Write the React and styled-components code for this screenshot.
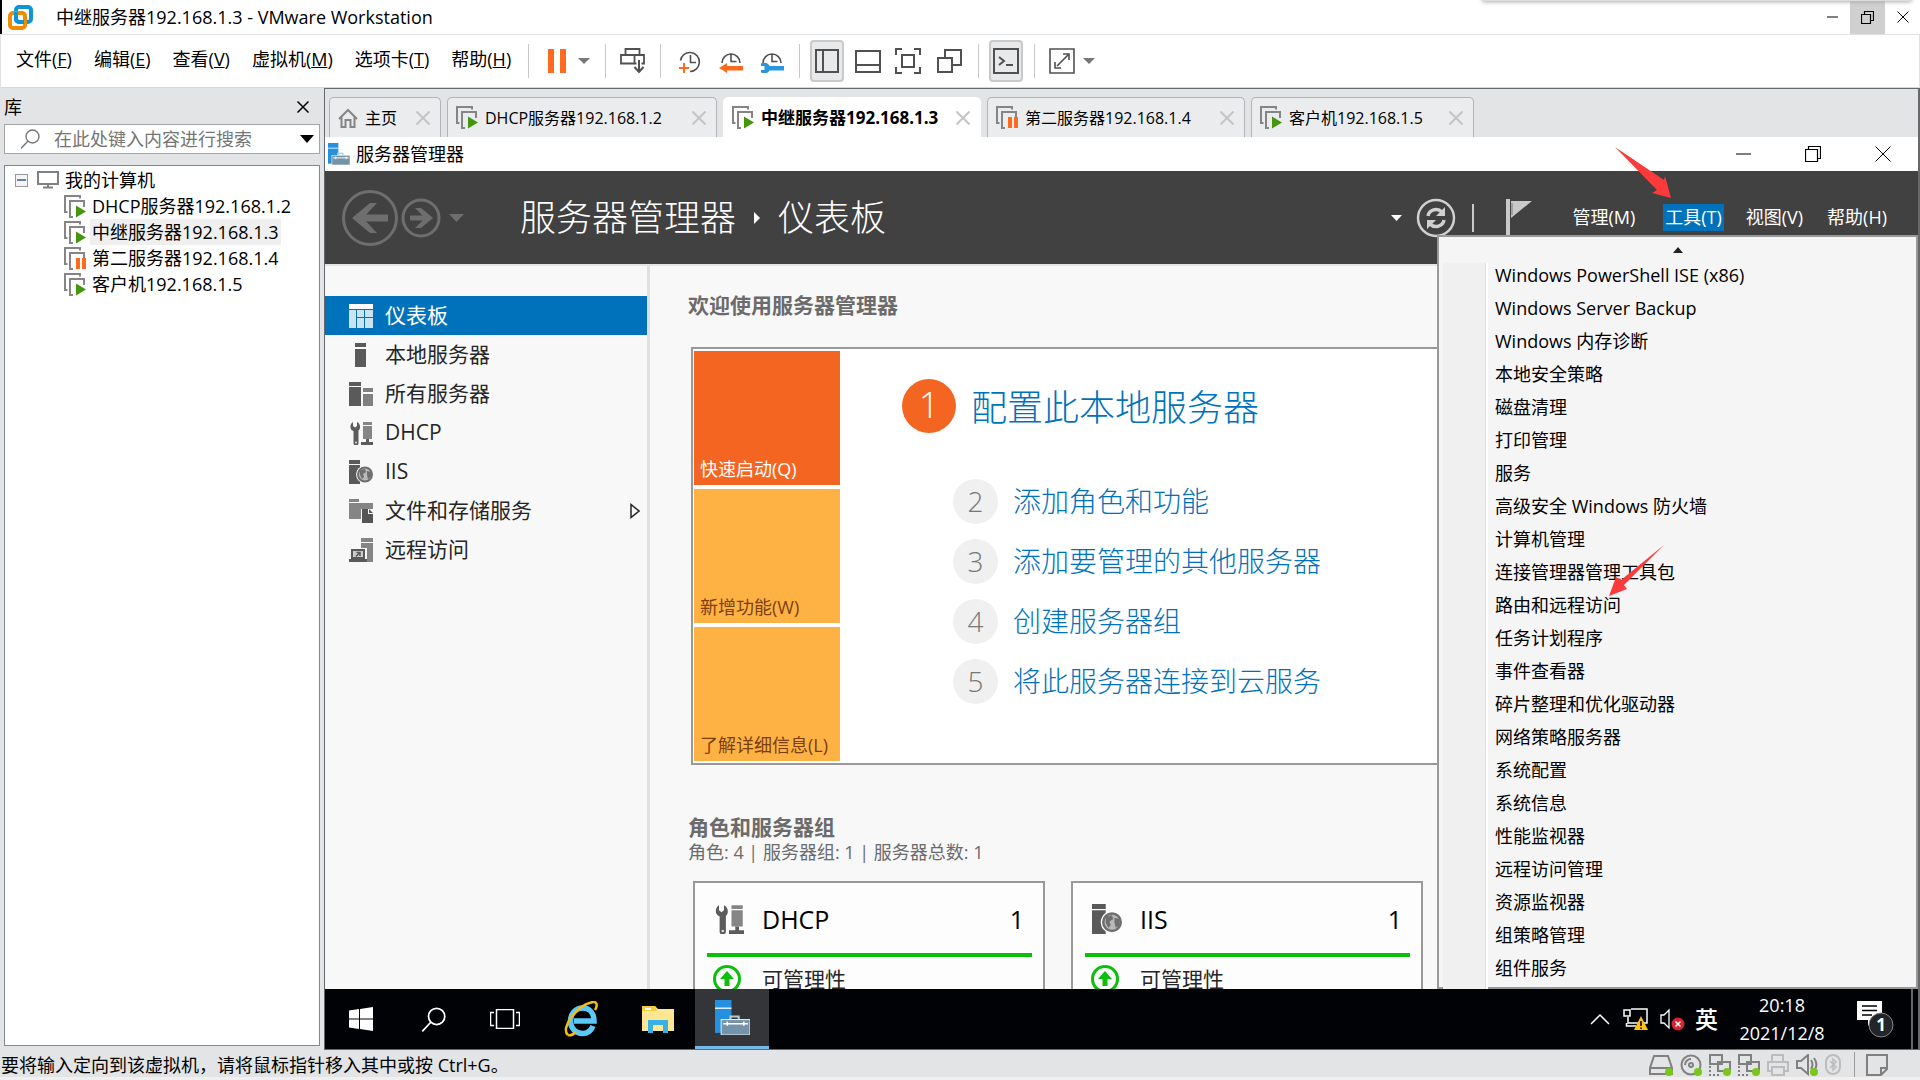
import React from "react";
import styled, { createGlobalStyle, css } from "styled-components";

const Global = createGlobalStyle`
  * { box-sizing: border-box; }
  html, body, #root { height: 100%; }
  body {
    margin: 0;
    overflow: hidden;
    background: #e3e4e6;
    color: #000;
    font: 400 18px/26px "Open Sans", "Noto Sans CJK SC", sans-serif;
  }
  button, input { font: inherit; color: inherit; }
  button { border: 0; padding: 0; background: none; text-align: left; white-space: nowrap; }
  ul { list-style: none; margin: 0; padding: 0; }
  h1, h2, h3, p { margin: 0; font-weight: inherit; }
  a { text-decoration: none; }
  svg { display: block; flex: none; }
`;

/* ---------- shell ---------- */
const Page = styled.div`
  height: 100vh;
  display: flex;
  flex-direction: column;
  overflow: hidden;
`;
const TitleBar = styled.header`
  position: relative;
  height: 34px;
  flex: none;
  display: flex;
  align-items: center;
  background: #fff;
  border-left: 2px solid #000;
  padding-left: 6px;
`;
const AppTitle = styled.h1`
  flex: 1;
  margin-left: 23px;
  font-size: 18px;
  line-height: 26px;
`;
const TopShade = styled.div`
  position: absolute;
  top: -6px;
  right: 8px;
  width: 430px;
  height: 7px;
  border-radius: 4px;
  background: #ddd;
  box-shadow: 0 1px 4px #aaa;
`;
const CaptionButton = styled.button`
  width: 35px;
  height: 34px;
  display: grid;
  place-items: center;
  background: ${(p) => (p.$on ? "#d0d0d0" : "transparent")};
`;
const MenuBar = styled.div`
  height: 54px;
  flex: none;
  display: flex;
  align-items: center;
  background: #fff;
  border: 1px solid #e1e1e1;
  border-bottom-color: #d8d8d8;
  padding: 0 0 1px 15px;
`;
const MenuList = styled.nav`
  display: flex;
  gap: 22px;
  padding-bottom: 3px;
`;
const Tools = styled.div`
  display: flex;
  align-items: center;
  height: 42px;
`;
const Rule = styled.span`
  width: 1px;
  height: 34px;
  background: #c8c8c8;
  margin: 0 ${(p) => p.$r}px 0 ${(p) => p.$l}px;
`;
const ToolButton = styled.button`
  width: ${(p) => p.$w || 26}px;
  height: 42px;
  display: grid;
  place-items: center;
  border-radius: 4px;
  ${(p) =>
    p.$on &&
    css`
      background: #e8e9eb;
      border: 2px solid #c9c9c9;
    `}
`;
const Body = styled.div`
  flex: 1;
  min-height: 0;
  display: flex;
`;

/* ---------- library ---------- */
const Library = styled.aside`
  width: 324px;
  flex: none;
  display: flex;
  flex-direction: column;
  padding: 6px 4px 4px;
`;
const LibraryHead = styled.div`
  display: flex;
  justify-content: space-between;
  align-items: center;
  height: 26px;
  padding-right: 11px;
`;
const SearchBox = styled.label`
  display: flex;
  align-items: center;
  height: 30px;
  margin-top: 4px;
  padding: 0 5px 0 15px;
  background: #fff;
  border: 1px solid #a5a5a5;
`;
const SearchInput = styled.input`
  flex: 1;
  min-width: 0;
  border: 0;
  outline: 0;
  padding: 0;
  margin-left: 14px;
  background: none;
  &::placeholder { color: #757575; opacity: 1; }
`;
const Tree = styled.ul`
  && { padding: 1px 0 0 10px; }
  flex: 1;
  margin-top: 11px;
  background: #fff;
  border: 1px solid #828790;
`;
const TreeRow = styled.li`
  display: flex;
  align-items: center;
  height: 26px;
  padding-left: ${(p) => (p.$child ? 49 : 0)}px;
`;
const TreeLabel = styled.span`
  margin-left: 4px;
  padding: 0 2px;
  background: ${(p) => (p.$on ? "#efefef" : "transparent")};
`;
const Expander = styled.button`
  width: 13px;
  height: 13px;
  margin-right: 9px;
  border: 1px solid #999;
  background: #f4f4f4;
  display: grid;
  place-items: center;
`;

/* ---------- machine view ---------- */
const Machine = styled.main`
  flex: 1;
  min-width: 0;
  display: flex;
  flex-direction: column;
  border: 1px solid #66686b;
  border-right-width: 2px;
`;
const TabStrip = styled.div`
  display: flex;
  gap: 6px;
  height: 48px;
  flex: none;
  padding: 8px 4px 0;
`;
const Tab = styled.div`
  width: ${(p) => p.$w}px;
  display: flex;
  align-items: center;
  padding: 0 10px 0 8px;
  font-size: ${(p) => (p.$on ? 17 : 16)}px;
  line-height: 24px;
  background: ${(p) => (p.$on ? "#fff" : "#ebecee")};
  font-weight: ${(p) => (p.$on ? 700 : 400)};
  border: 1px solid ${(p) => (p.$on ? "#fff" : "#b1b3b6")};
  border-bottom: 0;
  border-radius: 5px 5px 0 0;
`;
const TabButton = styled.button`
  flex: 1;
  display: flex;
  align-items: center;
  gap: 7px;
`;
const WindowBar = styled.div`
  height: 34px;
  flex: none;
  display: flex;
  align-items: center;
  background: #fff;
  padding-left: 3px;
`;
const WindowName = styled.h2`
  flex: 1;
  margin-left: 6px;
  font-size: 18px;
  line-height: 26px;
`;
const WindowButton = styled.button`
  width: 70px;
  height: 34px;
  display: grid;
  place-items: center;
`;
const Manager = styled.section`
  position: relative;
  flex: 1;
  min-height: 0;
  display: flex;
  flex-direction: column;
`;
const Banner = styled.header`
  height: 93px;
  flex: none;
  display: flex;
  align-items: center;
  background: #414141;
  color: #fff;
  padding: 0 29px 0 17px;
`;
const Crumbs = styled.h2`
  flex: 1;
  display: flex;
  align-items: center;
  gap: 18px;
  margin-left: 56px;
  font-size: 36px;
  line-height: 48px;
  font-weight: 300;
`;
const BannerMenu = styled.nav`
  display: flex;
  align-items: center;
  margin-left: 38px;
  gap: 20px;
`;
const BannerItem = styled.button`
  height: 27px;
  line-height: 24px;
  padding: 0 2px 2px;
  background: ${(p) => (p.$on ? "#0072bc" : "transparent")};
  &:first-child { margin-right: 6px; }
`;
const Work = styled.div`
  flex: 1;
  min-height: 0;
  display: flex;
  background: #f8f8f8;
  border-top: 2px solid #e4e4e4;
`;
const Side = styled.nav`
  width: 325px;
  flex: none;
  padding-top: 30px;
  border-right: 3px solid #e0e0e0;
`;
const SideItem = styled.button`
  width: 100%;
  height: 39px;
  display: flex;
  align-items: center;
  gap: 12px;
  padding: 0 7px 0 24px;
  font-size: 21px;
  line-height: 30px;
  color: ${(p) => (p.$on ? "#fff" : "#262626")};
  background: ${(p) => (p.$on ? "#0072bc" : "transparent")};
`;
const SideText = styled.span`
  flex: 1;
  padding-bottom: 2px;
`;
const Content = styled.div`
  flex: 1;
  min-width: 0;
  padding: 24px 0 0 38px;
  overflow: hidden;
`;
const SectionTitle = styled.h3`
  font-size: 21px;
  line-height: 30px;
  font-weight: 700;
  color: #6b6b6b;
`;
const Welcome = styled.div`
  display: flex;
  margin: 27px 0 0 3px;
  border: 2px solid #999;
  background: #fff;
  padding: 2px 1px;
`;
const Tiles = styled.div`
  width: 146px;
  display: flex;
  flex-direction: column;
  gap: 4px;
`;
const Tile = styled.button`
  height: 134px;
  display: flex;
  align-items: flex-end;
  padding: 0 6px 3px;
  background: ${(p) => (p.$on ? "#f56522" : "#ffb244")};
  color: ${(p) => (p.$on ? "#fff" : "#7c3f11")};
`;
const Steps = styled.div`
  flex: 1;
  padding: 28px 0 0 62px;
`;
const Step = styled.div`
  display: flex;
  align-items: center;
  gap: 15px;
  height: ${(p) => (p.$main ? 54 : 60)}px;
  margin-left: ${(p) => (p.$main ? 0 : 51)}px;
  margin-bottom: ${(p) => (p.$main ? 38 : 0)}px;
  font-size: ${(p) => (p.$main ? 36 : 28)}px;
  line-height: ${(p) => (p.$main ? 48 : 44)}px;
  font-weight: 300;
`;
const StepNumber = styled.span`
  width: ${(p) => (p.$main ? 54 : 45)}px;
  height: ${(p) => (p.$main ? 54 : 45)}px;
  border-radius: 50%;
  display: grid;
  place-items: center;
  padding-bottom: 2px;
  background: ${(p) => (p.$main ? "#f56522" : "#f0f0f0")};
  color: ${(p) => (p.$main ? "#fff" : "#777")};
`;
const StepLink = styled.a`
  padding-top: ${(p) => (p.$main ? 4 : 0)}px;
  color: #0072bc;
`;
const Groups = styled.section`
  margin-top: 47px;
`;
const Summary = styled.p`
  font-size: 18px;
  line-height: 20px;
  color: #6b6b6b;
`;
const Cards = styled.div`
  display: flex;
  gap: 26px;
  margin: 19px 0 0 5px;
`;
const Card = styled.article`
  width: 352px;
  flex: none;
  padding: 0 11px 0 12px;
  border: 2px solid #999;
  background: #fdfdfd;
`;
const CardHead = styled.div`
  display: flex;
  align-items: center;
  height: 74px;
  padding: 2px 8px 0 7px;
  border-bottom: 4px solid #0bbf0b;
  font-size: 25px;
  line-height: 32px;
`;
const CardName = styled.h3`
  flex: 1;
  margin-left: 18px;
  font-size: 25px;
`;
const CardRow = styled.button`
  display: flex;
  align-items: center;
  gap: 21px;
  padding: 7px 0 0 6px;
  font-size: 21px;
  line-height: 30px;
  color: #262626;
`;

/* ---------- tools menu ---------- */
const ToolsMenu = styled.div`
  position: absolute;
  top: 64px;
  right: 0;
  width: 481px;
  height: 754px;
  background: #f5f5f5;
  border: 2px solid #999;
  padding: 0 4px;
`;
const ScrollUp = styled.button`
  width: 100%;
  height: 26px;
  display: grid;
  place-items: center;
`;
const ToolsList = styled.ul`
  border-left: 42px solid #f0f0f0;
  box-shadow: inset 1px 0 #e0e0e0, inset 3px 0 #fff;
`;
const ToolsItem = styled.button`
  display: block;
  width: 100%;
  height: 33px;
  line-height: 24px;
  padding: 0 0 9px 10px;
`;
const Mark = styled.svg`
  position: absolute;
  top: ${(p) => p.$top}px;
  right: ${(p) => p.$right}px;
  pointer-events: none;
`;

/* ---------- task bar and status bar ---------- */
const TaskBar = styled.footer`
  height: 60px;
  flex: none;
  display: flex;
  align-items: center;
  background: #010206;
  color: #fff;
  border-right: 5px solid #010206;
`;
const TaskButton = styled.button`
  width: ${(p) => p.$w || 72}px;
  height: 60px;
  display: grid;
  place-items: center;
  ${(p) =>
    p.$on &&
    css`
      background: #343539;
      border-bottom: 3px solid #76b9ed;
    `}
`;
const Tray = styled.div`
  margin-left: auto;
  height: 100%;
  display: flex;
  align-items: center;
  border-right: 2px solid #666;
  padding-right: 17px;
`;
const Language = styled.span`
  font-size: 23px;
  line-height: 30px;
  font-weight: 500;
  margin: 0 17px 0 10px;
`;
const Clock = styled.div`
  width: 94px;
  font-size: 18px;
  line-height: 28px;
  text-align: center;
  margin-right: 28px;
`;
const StatusBar = styled.footer`
  height: 30px;
  flex: none;
  display: flex;
  align-items: center;
  padding: 0 32px 0 1px;
  border-bottom: 3px solid #f0f0f0;
`;
const StatusText = styled.p`
  flex: 1;
  padding-top: 3px;
`;
const StatusIcons = styled.div`
  display: flex;
  align-items: center;
  gap: 7px;
  padding-top: 2px;
`;
const StatusRule = styled.span`
  width: 1px;
  height: 25px;
  margin: 0 4px 0 6px;
  background: #999;
`;

/* ---------- drawings ---------- */
const Svg = ({ w, h, children, ...rest }) => (
  <svg width={w} height={h} viewBox={`0 0 ${w} ${h}`} fill="none" aria-hidden="true" {...rest}>
    {children}
  </svg>
);
const Caret = ({ w = 12, h = 6, c = "#777" }) => (
  <Svg w={w} h={h}><path d={`M0 0h${w}L${w / 2} ${h}z`} fill={c} /></Svg>
);
const Cross = ({ s = 12, c = "#000", t = 1 }) => (
  <Svg w={s} h={s}><path d={`M.5 .5L${s - 0.5} ${s - 0.5}M${s - 0.5} .5L.5 ${s - 0.5}`} stroke={c} strokeWidth={t} /></Svg>
);
const Restore = ({ s = 14 }) => (
  <Svg w={s} h={s}>
    <path d={`M.5 3.5h${s - 4}v${s - 4}h-${s - 4}zM3.5 3V.5h${s - 4}v${s - 4}H${s - 3}`} stroke="#000" strokeWidth="1.2" />
  </Svg>
);
const VmLogo = () => (
  <Svg w={25} h={25}>
    <rect x="8" y="2" width="15" height="15" rx="3" stroke="#0f95d6" strokeWidth="4" />
    <rect x="2" y="8" width="15" height="15" rx="3" stroke="#f38b00" strokeWidth="4" />
    <path d="M8 7v7a3 3 0 0 0 3 3h5" stroke="#0f95d6" strokeWidth="4" />
  </Svg>
);
const VmIcon = ({ paused }) => (
  <Svg w={22} h={23}>
    <path d="M3.500 17H1V1h15v2.500" stroke="#858585" strokeWidth="2" />
    <path d="M9 22H6V6h14v6" stroke="#858585" strokeWidth="2" />
    {paused ? (
      <path d="M12 11h4v11h-4zM18 11h4v11h-4z" fill="#ff6a1f" />
    ) : (
      <path d="M12 10.500L22 16.500 12 22.500z" fill="#45960f" />
    )}
  </Svg>
);
const Home = () => (
  <Svg w={20} h={20}><path d="M1 11l9-9 9 9M3.500 9v10h4v-7h5v7h4V9" stroke="#858585" strokeWidth="2" /></Svg>
);
const Monitor = () => (
  <Svg w={22} h={18}><path d="M1 1h20v12H1zM11 13v3M6 16.500h10" stroke="#808080" strokeWidth="2" /></Svg>
);
const Lens = ({ c = "#777", s = 20 }) => (
  <svg width={s} height={s} viewBox="0 0 20 20" fill="none" aria-hidden="true">
    <circle cx="12.500" cy="7.500" r="6.500" stroke={c} strokeWidth="1.400" /><path d="M8 12L1 19.500" stroke={c} strokeWidth="1.400" />
  </svg>
);
const ClockIcon = ({ kind }) => (
  <Svg w={24} h={24}>
    {kind === "take" ? (
      <path d="M2.500 11.500a9.500 9.500 0 1 1 9.500 11M12.500 6v7.500h5.500" stroke="#505050" strokeWidth="1.600" />
    ) : (
      <path d="M3 14a9 9 0 1 1 18 0M12 5v7.500h5.500" stroke="#505050" strokeWidth="1.600" />
    )}
    {kind === "take" && <path d="M6 14v10M1 19h10" stroke="#ff6a1f" strokeWidth="2" />}
    {kind === "back" && <path d="M0 19l8-5v3h16v4.500H8V24z" fill="#ff6a1f" />}
    {kind === "manage" && (
      <path d="M1 14.500c4-1.500 7-.5 8.500 2.500H24v4.500H9.500c-1.500 3-4.500 3.500-8.500 2v-2.500h3.500v-4H1z" fill="#2997de" />
    )}
  </Svg>
);
const Send = () => (
  <Svg w={25} h={25}>
    <path d="M5.500 7V1h14v6M1 7h23v8.500H1zM14.500 7v8.500" stroke="#505050" strokeWidth="1.800" />
    <path d="M19 13v10" stroke="#fff" strokeWidth="5" />
    <path d="M19 12v12M14.500 19l4.500 5 4.500-5" stroke="#505050" strokeWidth="2" />
  </Svg>
);
const Line = ({ d, w = 26, h = 26, t = 2, ...r }) => (
  <Svg w={w} h={h}><path d={d} stroke="#505050" strokeWidth={t} {...r} /></Svg>
);
const Pause = () => <Svg w={20} h={24}><path d="M1 0h6v24H1zM13 0h6v24h-6z" fill="#ff6a1f" /></Svg>;
const ServerIcon = ({ size = 22 }) => (
  <svg width={size} height={size} viewBox="0 0 34 34" aria-hidden="true">
    <path d="M0 0h16v32H0z" fill="#2490df" />
    <path d="M0 8h16" stroke="#d9efff" strokeWidth="1.500" />
    <path d="M15 20v-4h8v4" fill="none" stroke="#b9c9d3" strokeWidth="2" />
    <rect x="6" y="19" width="28" height="15" fill="#7593a8" stroke="#e3edf3" />
    <path d="M8 23h24M12 21v4M28 21v4" stroke="#fff" strokeWidth="1.500" />
  </svg>
);
const DashIcon = () => (
  <Svg w={24} h={24}>
    <path d="M0 0h24v5H0z" fill="#fff" />
    <path d="M0 6h7v18H0zM8 6h7v7H8zM16 6h8v7h-8zM8 14h7v10H8zM16 14h8v10h-8z" fill="#cbe3f3" />
  </Svg>
);
const LocalIcon = () => <Svg w={24} h={24}><path d="M6 0h11v4H6zM6 6h11v18H6z" fill="#5a5a5a" /></Svg>;
const AllIcon = () => (
  <Svg w={24} h={24}><path d="M0 0h12v4H0zM0 5h12v19H0z" fill="#5a5a5a" /><path d="M14 6h10v4H14zM14 12h10v12H14z" fill="#808080" /></Svg>
);
const DhcpIcon = ({ size = 24 }) => (
  <svg width={size} height={size} viewBox="0 0 24 24" aria-hidden="true">
    <path d="M4 1v4l2 1.500L8 5V1c3.500 1.500 4 6.500 1.500 8.500V22a2.500 2.500 0 0 1-5 0V10C.5 9 .5 3 4 1z" fill="#5c5c5c" />
    <circle cx="7" cy="21.500" r="1" fill="#ddd" />
    <path d="M14 1h9v3h-9zM14 5h9v13h-9z" fill="#858585" />
    <path d="M17 18h3v3h4v3H12v-3h5z" fill="#5c5c5c" />
  </svg>
);
const IisIcon = ({ size = 24, bg = "#f8f8f8" }) => (
  <svg width={size} height={size} viewBox="0 0 24 24" aria-hidden="true">
    <path d="M0 0h11v4H0zM0 5h11v19H0z" fill="#5a5a5a" />
    <circle cx="16" cy="14.500" r="9" fill={bg} />
    <circle cx="16" cy="14.500" r="7" fill="#b9b9b9" stroke="#6f6f6f" strokeWidth="2" />
    <path d="M11 10l5-1 1 3-3 2 1 3-2 2-2-4zM18 11l4 1v5l-3 2-1-4z" fill="#6f6f6f" />
  </svg>
);
const FilesIcon = () => (
  <Svg w={24} h={24}>
    <path d="M0 0h10v3H0zM0 4h24v6H12v10H0z" fill="#858585" />
    <path d="M13 10h6v5h5v9H13z" fill="#555" /><path d="M20 10l4 4h-4z" fill="#555" />
  </Svg>
);
const RemoteIcon = () => (
  <Svg w={24} h={24}>
    <path d="M12 0h12v4H12zM12 5h12v19H12z" fill="#858585" />
    <path d="M0 10h18v14H0z" fill="#f8f8f8" />
    <path d="M3 12h12v8H3z" fill="#ccc" stroke="#5a5a5a" strokeWidth="2" />
    <path d="M0 21h18v3H0z" fill="#5a5a5a" /><path d="M7 18.500l4-4m-3.500 0H11v3.500" stroke="#5a5a5a" strokeWidth="1.500" />
  </Svg>
);
const UpIcon = () => (
  <Svg w={28} h={28}><circle cx="14" cy="14" r="12.500" stroke="#0bbf0b" strokeWidth="3" /><path d="M14 6l7 8h-4.500v7h-5v-7H7z" fill="#0bbf0b" /></Svg>
);
const NavArrows = () => (
  <Svg w={122} h={56}>
    <g stroke="#6e6e6e">
      <circle cx="28" cy="28" r="26.500" strokeWidth="3" />
      <circle cx="79" cy="28" r="18" strokeWidth="3" />
      <path d="M46 28H14" strokeWidth="7" />
      <path d="M68 28h20" strokeWidth="5" />
    </g>
    <path d="M10 28l18-15h7L21 28l14 15h-7zM91 28L79 18h-6l10 10-10 10h6z" fill="#6e6e6e" />
    <path d="M107 24h15l-7.500 8z" fill="#6e6e6e" />
  </Svg>
);
const Refresh = () => (
  <Svg w={40} h={40}>
    <circle cx="20" cy="20" r="18" stroke="#d0d0d0" strokeWidth="2.500" />
    <path d="M12 18c1-6 9-9 14-4M28 22c-1 6-9 9-14 4" stroke="#d0d0d0" strokeWidth="3.500" />
    <path d="M29 9v9h-9zM11 31v-9h9z" fill="#d0d0d0" />
  </Svg>
);
const Flag = () => (
  <Svg w={26} h={38}><path d="M0 0h4v36H0z" fill="#c9c9c9" /><path d="M5 2h21L5 19z" fill="#c9c9c9" /><path d="M6 4v12" stroke="#777" /></Svg>
);
const WinLogo = () => (
  <Svg w={24} h={24}><path d="M0 3.500l10-1.500v9.500H0zM11 2l13-2v11.500H11zM0 12.500h10V22L0 20.500zM11 12.500h13V24l-13-2z" fill="#fff" /></Svg>
);
const TaskView = () => (
  <Svg w={30} h={20}><path d="M6.500 .5h17v19h-17zM4 3.500H.5v13H4M26 3.500h3.500v13H26" stroke="#fff" strokeWidth="1.500" /></Svg>
);
const Explorer = () => (
  <Svg w={32} h={27}>
    <path d="M0 0h13l3 3h16v22H0z" fill="#ffe694" /><path d="M0 0h13l2 5H0z" fill="#f8cd42" /><path d="M3 3h6" stroke="#fff" strokeWidth="2" />
    <path d="M6 14h20v13h-5v-8H11v8H6z" fill="#37b1e8" />
  </Svg>
);
const Ie = () => (
  <Svg w={36} h={36}>
    <path d="M30 25c-2 5-6 7.500-10.500 7.500-7 0-12-5.500-12-12.500S12.500 7 19.500 7 31 12 31 20H11" stroke="#5bc8f5" strokeWidth="5.500" />
    <path d="M5 34C-3 28 13 4 30 1c5-.5 4 5 2 8" stroke="#f3bd18" strokeWidth="2.500" />
    <path d="M5 34c3 1 6-1 8-3" stroke="#f3bd18" strokeWidth="2.500" />
  </Svg>
);
const Network = () => (
  <Svg w={25} h={23}>
    <path d="M8 1h16v14H5V9M1 2h6v6H1zM3.500 15v3H13" stroke="#fff" strokeWidth="1.500" />
    <path d="M18 8l7 14H11z" fill="#ffc20e" /><path d="M18 13v5M18 19.500v1.500" stroke="#000" strokeWidth="1.600" />
  </Svg>
);
const Muted = () => (
  <Svg w={25} h={23}>
    <path d="M1 7h3l5-5v18l-5-5H1z" stroke="#fff" strokeWidth="1.300" />
    <circle cx="18" cy="16" r="6.500" fill="#d9232e" /><path d="M15.500 13.500l5 5M20.500 13.500l-5 5" stroke="#fff" strokeWidth="1.500" />
  </Svg>
);
const Notices = () => (
  <Svg w={37} h={37}>
    <path d="M0 0h25v19H16l-5 6v-6H0z" fill="#fff" /><path d="M5 5h15M5 9.500h15M5 14h10" stroke="#000" strokeWidth="1.500" />
    <circle cx="24" cy="24" r="12" fill="#242529" stroke="#888" />
    <text x="24" y="30" fill="#fff" fontSize="17" fontWeight="700" textAnchor="middle">1</text>
  </Svg>
);
const Device = ({ kind, dim, on, w = 22 }) => (
  <Svg w={w} h={22}>
    <g stroke={dim ? "#bcbcbc" : "#808080"} strokeWidth="2">
      {kind === "disk" && <path d="M5 2h14l4 12v6H1v-6zM1 14h22" />}
      {kind === "cd" && <><circle cx="11" cy="11" r="9.500" /><circle cx="11" cy="11" r="2" /><path d="M5 11a6 6 0 0 1 6-6" /></>}
      {kind === "net" && <><path d="M1 1h12v9H1zM9 8h12v9H9z" fill="#e3e4e6" /><path d="M1 12v9h10" strokeDasharray="2 2" /></>}
      {kind === "print" && <path d="M5 8V1h11v7M5 17H1V8h20v9h-4M5 13h12v8H5z" />}
      {kind === "sound" && <path d="M1 7h4l7-6v19l-7-6H1zM15 6c2 3 2 6 0 9M18 4c3 4 3 9 0 13" />}
      {kind === "bt" && <><rect x="1" y="1" width="14" height="19" rx="7" /><path d="M5 7l6 6-3 3V5l3 3-6 6" strokeWidth="1.500" /></>}
      {kind === "note" && <path d="M1 1h20v14l-6 6H1zM21 14h-6v7" />}
    </g>
    {on && <circle cx={w - 4} cy="18" r="4" fill="#7ac71c" />}
  </Svg>
);

/* ---------- data ---------- */
const menus = [["文件", "F"], ["编辑", "E"], ["查看", "V"], ["虚拟机", "M"], ["选项卡", "T"], ["帮助", "H"]];
const machines = [
  { name: "DHCP服务器192.168.1.2", w: 270 },
  { name: "中继服务器192.168.1.3", w: 258, on: true },
  { name: "第二服务器192.168.1.4", w: 258, paused: true },
  { name: "客户机192.168.1.5", w: 223 },
];
const sideItems = [
  ["仪表板", <DashIcon />], ["本地服务器", <LocalIcon />], ["所有服务器", <AllIcon />], ["DHCP", <DhcpIcon />],
  ["IIS", <IisIcon />], ["文件和存储服务", <FilesIcon />], ["远程访问", <RemoteIcon />],
];
const steps = ["配置此本地服务器", "添加角色和功能", "添加要管理的其他服务器", "创建服务器组", "将此服务器连接到云服务"];
const toolItems = [
  "Windows PowerShell ISE (x86)", "Windows Server Backup", "Windows 内存诊断", "本地安全策略", "磁盘清理", "打印管理",
  "服务", "高级安全 Windows 防火墙", "计算机管理", "连接管理器管理工具包", "路由和远程访问", "任务计划程序", "事件查看器",
  "碎片整理和优化驱动器", "网络策略服务器", "系统配置", "系统信息", "性能监视器", "远程访问管理", "资源监视器", "组策略管理", "组件服务",
];

export default function App() {
  return (
    <Page>
      <Global />
      <TitleBar>
        <VmLogo />
        <AppTitle>中继服务器192.168.1.3 - VMware Workstation</AppTitle>
        <TopShade />
        <CaptionButton aria-label="最小化"><Svg w={11} h={2}><path d="M0 1h11" stroke="#000" /></Svg></CaptionButton>
        <CaptionButton $on aria-label="还原"><Restore s={13} /></CaptionButton>
        <CaptionButton aria-label="关闭"><Cross s={12} /></CaptionButton>
      </TitleBar>
      <MenuBar>
        <MenuList>
          {menus.map(([t, k]) => (
            <button key={t} type="button">{t}(<u>{k}</u>)</button>
          ))}
        </MenuList>
        <Tools>
          <Rule $l={17} $r={15} />
          <ToolButton aria-label="暂停"><Pause /></ToolButton>
          <ToolButton $w={28} aria-label="电源选项"><Caret /></ToolButton>
          <Rule $l={7} $r={13} />
          <ToolButton aria-label="发送按键"><Send /></ToolButton>
          <Rule $l={15} $r={8} />
          <ToolButton $w={41} aria-label="拍摄快照"><ClockIcon kind="take" /></ToolButton>
          <ToolButton $w={41} aria-label="恢复快照"><ClockIcon kind="back" /></ToolButton>
          <ToolButton $w={41} aria-label="管理快照"><ClockIcon kind="manage" /></ToolButton>
          <Rule $l={7} $r={10} />
          <ToolButton $on $w={34} aria-label="显示库"><Line w={24} d="M1 2h22v22H1zM8 2v22" /></ToolButton>
          <ToolButton $w={47} aria-label="显示缩略图"><Line d="M1 3h24v21H1zM1 17h24" /></ToolButton>
          <ToolButton $w={34} aria-label="全屏"><Line d="M1 7V1h6M19 1h6v6M25 19v6h-6M7 25H1v-6M7 7h12v12H7z" /></ToolButton>
          <ToolButton $w={49} aria-label="Unity"><Line d="M1 10h14v14H1zM8 10V2h16v15h-9" /></ToolButton>
          <Rule $l={4} $r={10} />
          <ToolButton $on $w={34} aria-label="控制台"><Line d="M1 1h24v24H1zM6 9l5 4-5 4M13 17h7" /></ToolButton>
          <Rule $l={11} $r={10} />
          <ToolButton $w={34} aria-label="拉伸"><Line d="M1 1h24v24H1zM14 6h6v6M6 14v6h6M8 18L19 7" t={1.6} /></ToolButton>
          <ToolButton $w={20} aria-label="拉伸选项"><Caret /></ToolButton>
        </Tools>
      </MenuBar>
      <Body>
        <Library>
          <LibraryHead><span>库</span><button type="button" aria-label="关闭库"><Cross s={12} t={1.5} /></button></LibraryHead>
          <SearchBox>
            <Lens />
            <SearchInput placeholder="在此处键入内容进行搜索" aria-label="搜索" />
            <Caret w={14} h={8} c="#000" />
          </SearchBox>
          <Tree>
            <TreeRow>
              <Expander aria-label="折叠"><Svg w={9} h={2}><path d="M0 1h9" stroke="#3c55a5" strokeWidth="1.500" /></Svg></Expander>
              <Monitor /><TreeLabel>我的计算机</TreeLabel>
            </TreeRow>
            {machines.map((m) => (
              <TreeRow key={m.name} $child><VmIcon paused={m.paused} /><TreeLabel $on={m.on}>{m.name}</TreeLabel></TreeRow>
            ))}
          </Tree>
        </Library>
        <Machine>
          <TabStrip>
            <Tab $w={112}><TabButton><Home />主页</TabButton><button type="button" aria-label="关闭"><Cross s={14} c="#c4c4c4" t={2} /></button></Tab>
            {machines.map((m) => (
              <Tab key={m.name} $w={m.w} $on={m.on}>
                <TabButton><VmIcon paused={m.paused} />{m.name}</TabButton>
                <button type="button" aria-label="关闭"><Cross s={14} c="#c4c4c4" t={2} /></button>
              </Tab>
            ))}
          </TabStrip>
          <WindowBar>
            <ServerIcon />
            <WindowName>服务器管理器</WindowName>
            <WindowButton aria-label="最小化"><Svg w={15} h={2}><path d="M0 1h15" stroke="#000" /></Svg></WindowButton>
            <WindowButton aria-label="还原"><Restore s={16} /></WindowButton>
            <WindowButton aria-label="关闭"><Cross s={16} /></WindowButton>
          </WindowBar>
          <Manager>
            <Banner>
              <NavArrows />
              <Crumbs>服务器管理器<Svg w={6} h={12}><path d="M0 0l6 6-6 6z" fill="#fff" /></Svg>仪表板</Crumbs>
              <Caret w={11} h={6} c="#fff" />
              <Svg w={14} h={1} />
              <Refresh />
              <Svg w={50} h={28}><path d="M17 0v28" stroke="#c9c9c9" strokeWidth="2" /></Svg>
              <Flag />
              <BannerMenu>
                <BannerItem>管理(M)</BannerItem><BannerItem $on>工具(T)</BannerItem><BannerItem>视图(V)</BannerItem><BannerItem>帮助(H)</BannerItem>
              </BannerMenu>
            </Banner>
            <Work>
              <Side>
                {sideItems.map(([t, icon], i) => (
                  <SideItem key={t} $on={i === 0}>
                    {icon}<SideText>{t}</SideText>
                    {i === 5 && <Svg w={10} h={16}><path d="M1 1.500v13L9 8z" stroke="#262626" strokeWidth="1.500" /></Svg>}
                  </SideItem>
                ))}
              </Side>
              <Content>
                <SectionTitle>欢迎使用服务器管理器</SectionTitle>
                <Welcome>
                  <Tiles><Tile $on>快速启动(Q)</Tile><Tile>新增功能(W)</Tile><Tile>了解详细信息(L)</Tile></Tiles>
                  <Steps>
                    {steps.map((t, i) => (
                      <Step key={t} $main={i === 0}><StepNumber $main={i === 0}>{i + 1}</StepNumber><StepLink $main={i === 0} href="#">{t}</StepLink></Step>
                    ))}
                  </Steps>
                </Welcome>
                <Groups>
                  <SectionTitle>角色和服务器组</SectionTitle>
                  <Summary>角色: 4 | 服务器组: 1 | 服务器总数: 1</Summary>
                  <Cards>
                    {["DHCP", "IIS"].map((t) => (
                      <Card key={t}>
                        <CardHead>{t === "IIS" ? <IisIcon size={30} bg="#fdfdfd" /> : <DhcpIcon size={30} />}<CardName>{t}</CardName><span>1</span></CardHead>
                        <CardRow><UpIcon />可管理性</CardRow>
                      </Card>
                    ))}
                  </Cards>
                </Groups>
              </Content>
            </Work>
            <ToolsMenu>
              <ScrollUp aria-label="向上滚动"><Svg w={10} h={6}><path d="M0 6h10L5 0z" fill="#222" /></Svg></ScrollUp>
              <ToolsList>{toolItems.map((t) => <li key={t}><ToolsItem>{t}</ToolsItem></li>)}</ToolsList>
            </ToolsMenu>
            <Mark $top={-24} $right={247} width="56" height="51" viewBox="0 0 56 51" aria-hidden="true"><path d="M0 0L49 33 50 29 56 51 37 46 42 43z" fill="#fb3b3b" /></Mark>
            <Mark $top={374} $right={254} width="55" height="51" viewBox="0 0 55 51" aria-hidden="true"><path d="M55 0L15 40 18 44 0 51 7 32 12 35z" fill="#fb3b3b" /></Mark>
          </Manager>
          <TaskBar>
            <TaskButton aria-label="开始"><WinLogo /></TaskButton>
            <TaskButton aria-label="搜索"><Lens c="#fff" s={25} /></TaskButton>
            <TaskButton aria-label="任务视图"><TaskView /></TaskButton>
            <TaskButton $w={80} aria-label="Internet Explorer"><Ie /></TaskButton>
            <TaskButton $w={74} aria-label="文件资源管理器"><Explorer /></TaskButton>
            <TaskButton $w={74} $on aria-label="服务器管理器"><ServerIcon size={35} /></TaskButton>
            <Tray>
              <Svg w={33} h={12}><path d="M1 11l9-9 9 9" stroke="#fff" strokeWidth="1.500" /></Svg>
              <Network /><Svg w={12} h={1} /><Muted />
              <Language>英</Language>
              <Clock>20:18<br />2021/12/8</Clock>
              <Notices />
            </Tray>
          </TaskBar>
        </Machine>
      </Body>
      <StatusBar>
        <StatusText>要将输入定向到该虚拟机，请将鼠标指针移入其中或按 Ctrl+G。</StatusText>
        <StatusIcons>
          <Device kind="disk" on w={24} /><Device kind="cd" on /><Device kind="net" on /><Device kind="net" on />
          <Device kind="print" dim /><Device kind="sound" on /><Device kind="bt" dim w={16} /><StatusRule /><Device kind="note" />
        </StatusIcons>
      </StatusBar>
    </Page>
  );
}
